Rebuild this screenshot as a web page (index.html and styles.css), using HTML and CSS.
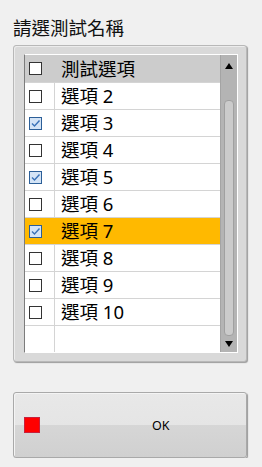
FILE: index.html
```html
<!DOCTYPE html>
<html>
<head>
<meta charset="utf-8">
<link rel="stylesheet" href="styles.css">
</head>
<body>
<div class="title">請選測試名稱</div>
<div class="frame">
  <div class="list">
    <div class="rows">
      <div class="row head"><span class="cb"><span class="box"></span></span><span class="label">測試選項</span></div>
      <div class="row"><span class="cb"><span class="box"></span></span><span class="label">選項 2</span></div>
      <div class="row"><span class="cb"><span class="box on"><svg viewBox="0 0 11 11" width="11" height="11"><path d="M2 5.5 L4.5 8 L9.5 2.5" fill="none" stroke="#3a72b8" stroke-width="1.4"/></svg></span></span><span class="label">選項 3</span></div>
      <div class="row"><span class="cb"><span class="box"></span></span><span class="label">選項 4</span></div>
      <div class="row"><span class="cb"><span class="box on"><svg viewBox="0 0 11 11" width="11" height="11"><path d="M2 5.5 L4.5 8 L9.5 2.5" fill="none" stroke="#3a72b8" stroke-width="1.4"/></svg></span></span><span class="label">選項 5</span></div>
      <div class="row"><span class="cb"><span class="box"></span></span><span class="label">選項 6</span></div>
      <div class="row sel"><span class="cb"><span class="box on"><svg viewBox="0 0 11 11" width="11" height="11"><path d="M2 5.5 L4.5 8 L9.5 2.5" fill="none" stroke="#3a72b8" stroke-width="1.4"/></svg></span></span><span class="label">選項 7</span></div>
      <div class="row"><span class="cb"><span class="box"></span></span><span class="label">選項 8</span></div>
      <div class="row"><span class="cb"><span class="box"></span></span><span class="label">選項 9</span></div>
      <div class="row"><span class="cb"><span class="box"></span></span><span class="label">選項 10</span></div>
      <div class="row"><span class="cb"></span><span class="label"></span></div>
    </div>
    <div class="scroll">
      <div class="up"></div>
      <div class="thumb"></div>
      <div class="down"></div>
    </div>
  </div>
</div>
<button class="ok"><span class="red"></span><span class="oklabel">OK</span></button>
</body>
</html>
```
FILE: styles.css
```css
html, body {
  margin: 0;
  padding: 0;
  background: #f0f0f0;
}
body {
  font-family: "Noto Sans", "Noto Sans CJK TC", sans-serif;
  color: #000;
}
.title {
  margin-left: 13px;
  padding-top: 15px;
  line-height: 26px;
  height: 26px;
  font-size: 18.5px;
  margin-bottom: 4px;
  color: #111;
}
.frame {
  margin-left: 13px;
  width: 234px;
  height: 317px;
  box-sizing: border-box;
  border: 1px solid #b8b8b8;
  border-radius: 3px;
  padding: 8px 8px 8px 10px;
  background: #d9d9d9;
  box-shadow: 1px 1px 1px #9c9c9c, inset 1px 1px 0 #ececec;
}
.list {
  display: flex;
  height: 299px;
  box-sizing: border-box;
  border-top: 1px solid #ffffff;
  border-left: 1px solid #7c7c7c;
  border-right: 1px solid #ffffff;
  border-bottom: 1px solid #ffffff;
  background: #fff;
}
.rows {
  width: 195px;
  display: flex;
  flex-direction: column;
}
.row {
  display: flex;
  align-items: center;
  height: 26px;
  border-top: 1px solid #d4d4d4;
  font-size: 18.5px;
  background: #fff;
}
.row.head {
  height: 27px;
  border-top: none;
  background: #cccccc;
}
.row.sel {
  background: #ffb900;
}
.cb {
  width: 29px;
  height: 100%;
  flex: none;
  display: flex;
  align-items: center;
  border-right: 1px solid #d4d4d4;
}
.head .cb, .sel .cb {
  border-right-color: transparent;
}
.box {
  width: 13px;
  height: 13px;
  box-sizing: border-box;
  margin-left: 4px;
  border: 1px solid #333333;
  background: #fff;
  display: flex;
  align-items: center;
  justify-content: center;
}
.box.on {
  border-color: #2c5f98;
  background: #d4e4f6;
}
.label {
  padding-left: 6px;
  line-height: 26px;
  white-space: nowrap;
}
.scroll {
  width: 17px;
  box-sizing: border-box;
  background: #b4b4b4;
  border-left: 1px solid #a4a4a4;
  display: flex;
  flex-direction: column;
  align-items: center;
}
.up {
  margin-top: 8px;
  width: 0;
  height: 0;
  border-left: 4px solid transparent;
  border-right: 4px solid transparent;
  border-bottom: 6px solid #000;
}
.thumb {
  margin-top: 31px;
  flex: 1;
  width: 10px;
  box-sizing: border-box;
  border: 1px solid #a0a0a0;
  border-radius: 4px;
  background: #cbcbcb;
}
.down {
  margin-top: 5px;
  margin-bottom: 5px;
  width: 0;
  height: 0;
  border-left: 4px solid transparent;
  border-right: 4px solid transparent;
  border-top: 6px solid #000;
}
.ok {
  margin: 30px 0 0 13px;
  width: 234px;
  height: 66px;
  box-sizing: border-box;
  border: 1px solid #a9a9a9;
  border-radius: 3px;
  background: linear-gradient(#e8e8e8 0, #e5e5e5 50%, #d6d6d6 50%, #d0d0d0 100%);
  box-shadow: 1px 1px 1px #9a9a9a, inset 1px 1px 0 #f4f4f4;
  display: flex;
  align-items: center;
  padding: 0 0 0 10px;
  font-family: "Noto Sans", sans-serif;
  font-size: 12.5px;
  color: #000;
}
.red {
  width: 16px;
  height: 16px;
  box-sizing: border-box;
  background: #ff0000;
  border: 1px solid #c8203c;
  flex: none;
}
.oklabel {
  margin-left: 112px;
}
```
